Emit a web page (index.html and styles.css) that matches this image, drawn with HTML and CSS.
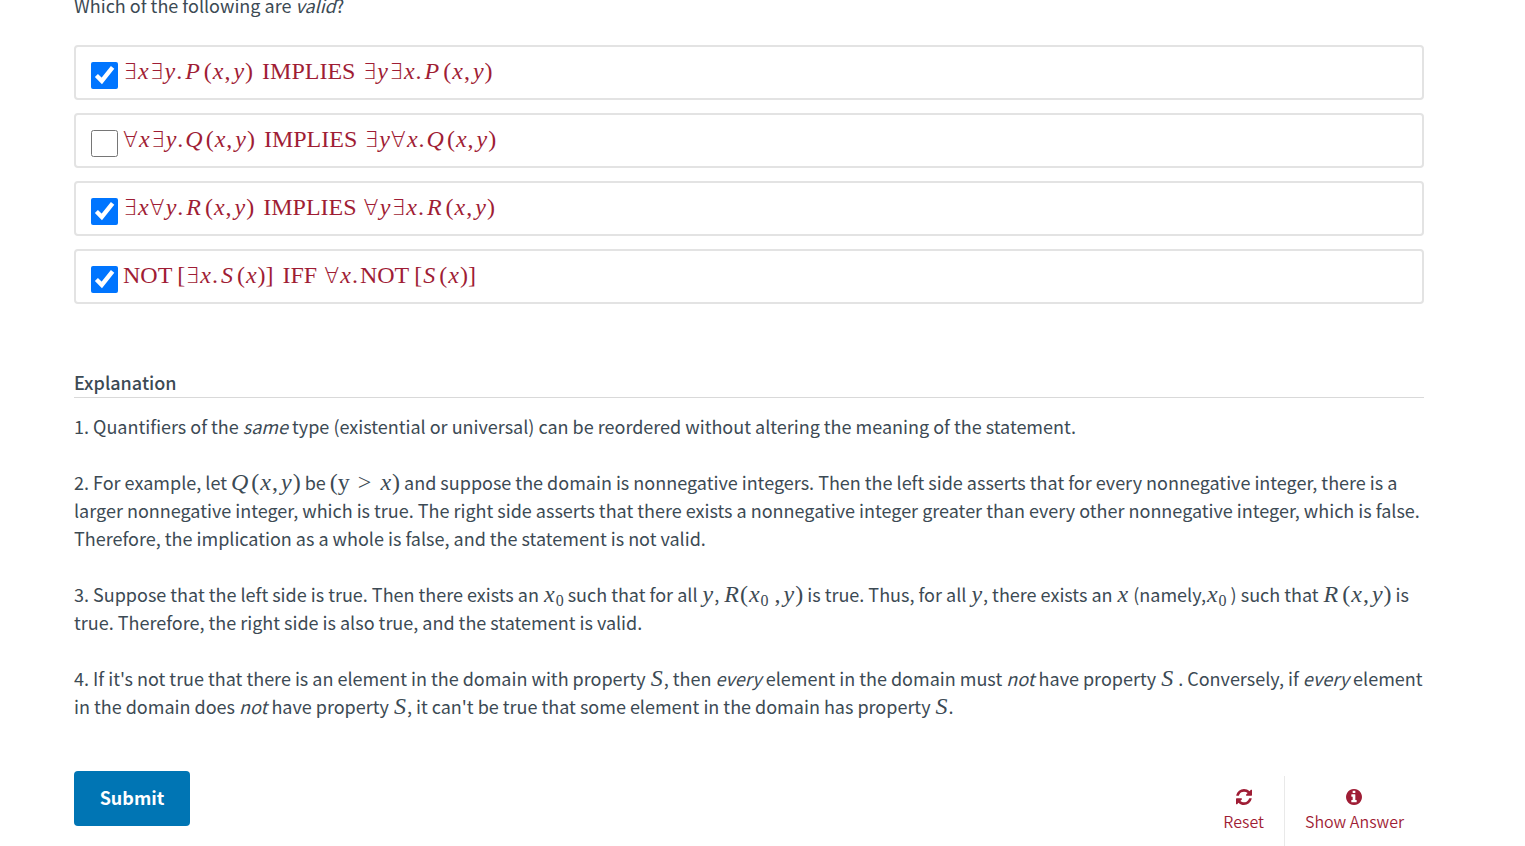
FILE: index.html
```html
<!DOCTYPE html>
<html lang="en">
<head>
<meta charset="utf-8">
<meta name="viewport" content="width=device-width, initial-scale=1">
<title>Validity of quantified statements</title>
<link rel="stylesheet" href="styles.css">
</head>
<body>
<main class="problem">
<form>
<fieldset class="choices">
<legend>Which of the following are <em>valid</em>?</legend>
<label class="choice"><input type="checkbox" checked><span class="math"><b>∃</b><i>x</i><b>∃</b><i>y</i><s>.</s><i class="pred">P</i>(<i>x</i><s>,</s><i>y</i>)<span class="word">IMPLIES</span><b>∃</b><i>y</i><b>∃</b><i>x</i><s>.</s><i class="pred">P</i>(<i>x</i><s>,</s><i>y</i>)</span></label>
<label class="choice"><input type="checkbox"><span class="math"><b>∀</b><i>x</i><b>∃</b><i>y</i><s>.</s><i class="pred wide">Q</i>(<i>x</i><s>,</s><i>y</i>)<span class="word">IMPLIES</span><b>∃</b><i>y</i><b>∀</b><i>x</i><s>.</s><i class="pred wide">Q</i>(<i>x</i><s>,</s><i>y</i>)</span></label>
<label class="choice"><input type="checkbox" checked><span class="math"><b>∃</b><i>x</i><b>∀</b><i>y</i><s>.</s><i class="pred">R</i>(<i>x</i><s>,</s><i>y</i>)<span class="word">IMPLIES</span><b>∀</b><i>y</i><b>∃</b><i>x</i><s>.</s><i class="pred">R</i>(<i>x</i><s>,</s><i>y</i>)</span></label>
<label class="choice"><input type="checkbox" checked><span class="math"><span class="not">NOT</span>[<b>∃</b><i>x</i><s>.</s><i class="pred">S</i>(<i>x</i>)]<span class="word">IFF</span><b>∀</b><i>x</i><s>.</s><span class="not">NOT</span>[<i class="pred">S</i>(<i>x</i>)]</span></label>
</fieldset>
<section class="explanation">
<h2>Explanation</h2>
<p>1. Quantifiers of the <em>same</em> type (existential or universal) can be reordered without altering the meaning of the statement.</p>
<p>2. For example, let <span class="math"><i class="pred wide">Q</i>(<i>x</i><s>,</s><i>y</i>)</span> be <span class="math">(y<span class="rel">&gt;</span><i>x</i>)</span> and suppose the domain is nonnegative integers. Then the left side asserts that for every nonnegative integer, there is a larger nonnegative integer, which is true. The right side asserts that there exists a nonnegative integer greater than every other nonnegative integer, which is false. Therefore, the implication as a whole is false, and the statement is not valid.</p>
<p>3. Suppose that the left side is true. Then there exists an <span class="math"><i>x</i><sub>0</sub></span> such that for all <span class="math"><i>y</i></span>, <span class="math"><i>R</i>(<i>x</i><sub>0</sub> <s>,</s><i>y</i>)</span> is true. Thus, for all <span class="math"><i>y</i></span>, there exists an <span class="math"><i>x</i></span> (namely,<span class="math"><i>x</i><sub>0</sub></span> ) such that <span class="math"><i class="pred">R</i>(<i>x</i><s>,</s><i>y</i>)</span> is true. Therefore, the right side is also true, and the statement is valid.</p>
<p>4. If it's not true that there is an element in the domain with property <span class="math"><i>S</i></span>, then <em>every</em> element in the domain must <em>not</em> have property <span class="math"><i>S</i></span> . Conversely, if <em>every</em> element in the domain does <em>not</em> have property <span class="math"><i>S</i></span>, it can't be true that some element in the domain has property <span class="math"><i>S</i></span>.</p>
</section>
<div class="actions">
<button class="submit" type="button">Submit</button>
<div class="tools">
<button type="button"><svg viewBox="0 0 1536 1536" aria-hidden="true"><path d="M1511 928q0 5-1 7-64 268-268 434.500t-478 166.500q-146 0-282.500-55t-243.500-157l-129 129q-19 19-45 19t-45-19-19-45v-448q0-26 19-45t45-19h448q26 0 45 19t19 45-19 45l-137 137q71 66 161 102t187 36q134 0 250-65t186-179q11-17 53-117 8-23 30-23h192q13 0 22.500 9.500t9.500 22.500zm25-800v448q0 26-19 45t-45 19h-448q-26 0-45-19t-19-45 19-45l138-138q-148-137-349-137-134 0-250 65t-186 179q-11 17-53 117-8 23-30 23h-199q-13 0-22.500-9.500t-9.500-22.500v-7q65-268 270-434.500t480-166.500q146 0 284 55.500t245 156.500l130-129q19-19 45-19t45 19 19 45z"/></svg>Reset</button>
<button type="button"><svg viewBox="0 0 1536 1536" aria-hidden="true"><path d="M1024 1248v-160q0-14-9-23t-23-9h-96v-512q0-14-9-23t-23-9h-320q-14 0-23 9t-9 23v160q0 14 9 23t23 9h96v320h-96q-14 0-23 9t-9 23v160q0 14 9 23t23 9h448q14 0 23-9t9-23zm-128-896v-160q0-14-9-23t-23-9h-192q-14 0-23 9t-9 23v160q0 14 9 23t23 9h192q14 0 23-9t9-23zm640 416q0 209-103 385.500t-279.500 279.500-385.500 103-385.500-103-279.500-279.500-103-385.500 103-385.500 279.500-279.500 385.500-103 385.500 103 279.500 279.500 103 385.500z"/></svg>Show Answer</button>
</div>
</div>
</form>
</main>
</body>
</html>
```
FILE: styles.css
```css
* { box-sizing: border-box; }
html { overflow: hidden; }
body {
  margin: 0;
  color: #3c4a54;
  background: #fff;
  font: 18px/28px "Noto Sans CJK SC", "Noto Sans", sans-serif;
}
.problem { padding: 0 101px 0 74px; margin-top: -9px; }
.choices {
  display: flex;
  flex-direction: column;
  gap: 13px;
  margin: 0;
  padding: 0;
  border: 0;
}
legend { padding: 0; margin-bottom: 26px; }
.choice {
  display: flex;
  align-items: center;
  gap: 5px;
  height: 55px;
  padding: 0 15px;
  border: 2px solid #e3e3e3;
  border-radius: 4px;
  color: #9f1d35;
}
.choice input { width: 27px; height: 27px; margin: 5px 0 0; }
.math {
  font-family: "Liberation Serif", "DejaVu Serif", serif;
  font-size: 24px;
  line-height: 24px;
  white-space: nowrap;
}
.choice .math { padding-bottom: 3px; }
.math i { padding: 0 1px; }
.math .pred { padding: 0 4px 0 1px; }
.math .wide { padding: 0 3px 0 0; }
.math b { font-family: "DejaVu Sans", sans-serif; font-size: 22px; font-weight: 200; }
.math s { text-decoration: none; padding-right: 2px; }
.math sub { font-size: 16px; line-height: 14px; vertical-align: -4px; }
.word { padding: 0 7px 0 9px; }
.not { padding-right: 5px; }
.rel { padding: 0 8px; }
.explanation { margin-top: 64px; }
h2 {
  margin: 0 0 14px;
  padding-bottom: 1px;
  border-bottom: 1px solid #d9d9d9;
  font-size: 18px;
  line-height: 28px;
  font-weight: 500;
}
p { margin: 0 0 28px; }
.actions {
  display: flex;
  justify-content: space-between;
  align-items: flex-start;
  margin-top: 51px;
}
button { border: 0; font-family: inherit; cursor: pointer; }
.submit {
  width: 116px;
  height: 55px;
  padding: 0 0 3px;
  border-radius: 4px;
  background: #0075b4;
  color: #fff;
  font-size: 18px;
  font-weight: 700;
}
.tools { display: flex; margin-top: 5px; }
.tools button {
  display: flex;
  flex-direction: column;
  align-items: center;
  height: 71px;
  padding: 13px 20px 0;
  background: none;
  color: #9f1d35;
  font-size: 16px;
  font-weight: 350;
  line-height: 32px;
}
.tools button + button { border-left: 1px solid #e9e9e9; }
.tools svg { width: 16px; height: 16px; fill: currentColor; }
```
